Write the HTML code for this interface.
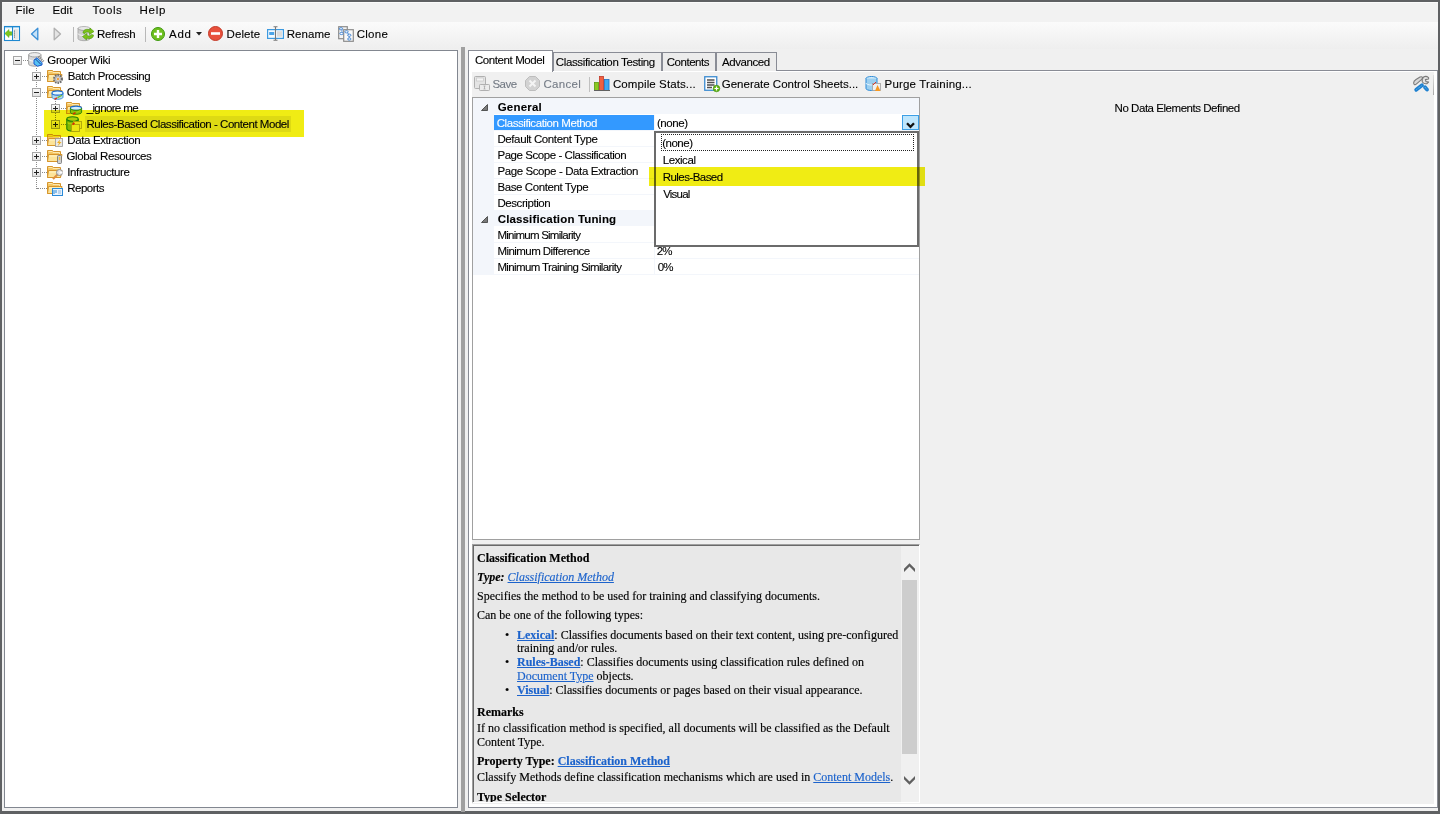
<!DOCTYPE html>
<html><head><meta charset="utf-8"><style>
*{box-sizing:border-box}
html,body{margin:0;padding:0}
body{width:1440px;height:814px;position:relative;overflow:hidden;background:#5f6163;font-family:"Liberation Sans",sans-serif;font-size:11.5px;letter-spacing:-0.45px;color:#000}
.a{position:absolute}
.t{position:absolute;white-space:nowrap;line-height:14px;-webkit-text-stroke:0.1px currentColor}
svg{position:absolute;overflow:visible}
.s{position:absolute;white-space:nowrap;font-family:"Liberation Serif",serif;font-size:12px;letter-spacing:0;line-height:14px;color:#000;-webkit-text-stroke:0.15px currentColor}
.lk{color:#1c63cc;text-decoration:underline}
.dis{color:#8d8d8d}
.hl{position:absolute;background:#f0ec14;mix-blend-mode:multiply}
.exp{position:absolute;width:9px;height:9px;border:1px solid #a6a6a6;background:linear-gradient(#fafafa,#e2e2e2)}
.exp .h{position:absolute;left:1px;top:3px;width:5px;height:1px;background:#222}
.exp .v{position:absolute;left:3px;top:1px;width:1px;height:5px;background:#222}
.dh{position:absolute;height:0;border-top:1px dotted #8a8a8a}
.dv{position:absolute;width:0;border-left:1px dotted #8a8a8a}
</style></head><body>
<div class="a" style="left:2px;top:2px;width:1436px;height:809px;background:#f0f0f0;"></div>
<div class="a" style="left:2px;top:2px;width:1436px;height:1px;background:#fbfbfb;"></div>
<div class="a" style="left:2px;top:3px;width:1436px;height:19px;background:#f2f2f2;"></div>
<div class="t" style="left:15.5px;top:3px;letter-spacing:0.233px;">File</div>
<div class="t" style="left:52.4px;top:3px;letter-spacing:0.067px;">Edit</div>
<div class="t" style="left:92.6px;top:3px;letter-spacing:0.6px;">Tools</div>
<div class="t" style="left:139.5px;top:3px;letter-spacing:0.733px;">Help</div>
<div class="a" style="left:2px;top:22px;width:1436px;height:27px;background:linear-gradient(#fbfbfb,#eeeeee);"></div>
<svg style="left:4px;top:26px" width="16" height="15" viewBox="0 0 16 15">
 <rect x="0.5" y="0.5" width="15" height="14" fill="#fff" stroke="#1e88d0" stroke-width="1.1"/>
 <rect x="1" y="1" width="14" height="1.2" fill="#9fd0f0"/>
 <rect x="8" y="1" width="1.1" height="13.5" fill="#1e88d0"/>
 <rect x="9.6" y="3" width="5" height="10.5" fill="#e6e6e6"/>
 <circle cx="10.5" cy="5" r=".55" fill="#444"/><circle cx="10.5" cy="7" r=".55" fill="#444"/><circle cx="10.5" cy="9" r=".55" fill="#444"/><circle cx="10.5" cy="11" r=".55" fill="#444"/>
 <path d="M0.8 7.5 L5 3.5 L5 5.8 L7.8 5.8 L7.8 9.2 L5 9.2 L5 11.5 Z" fill="#7cc81e" stroke="#52a010" stroke-width=".5"/>
</svg>
<svg style="left:30px;top:27px" width="9" height="14" viewBox="0 0 9 14">
 <path d="M7.8 1.2 L7.8 12.8 L1.5 7 Z" fill="#c6e2f8" stroke="#3a8fd6" stroke-width="1.3" stroke-linejoin="round"/>
</svg>
<svg style="left:53px;top:27px" width="9" height="14" viewBox="0 0 9 14">
 <path d="M1.2 1.2 L1.2 12.8 L7.5 7 Z" fill="#e4e4e4" stroke="#b0b0b0" stroke-width="1.3" stroke-linejoin="round"/>
</svg>
<div class="a" style="left:73px;top:27px;width:1px;height:15px;background:#b8b8b8;"></div>
<svg style="left:77px;top:26px" width="18" height="16" viewBox="0 0 18 16">
 <ellipse cx="7" cy="2.5" rx="6" ry="2" fill="#e8e8e8" stroke="#a8a8a8" stroke-width=".8"/>
 <path d="M1 2.5 L1 12.5 A6 2.2 0 0 0 13 12.5 L13 2.5 A6 2 0 0 1 1 2.5Z" fill="#cfcfcf" stroke="#a0a0a0" stroke-width=".8"/>
 <path d="M1 7.5 A6 2 0 0 0 13 7.5" fill="none" stroke="#f5f5f5" stroke-width="1"/>
 <path d="M6 7 C6 3.5 10 2.5 13 4 L13 2 L17 5.5 L12.5 8.5 L12.5 6.5 C10.5 5.5 8.5 6 8 7.5Z" fill="#7cc21a" stroke="#4f9a0a" stroke-width=".6"/>
 <path d="M16.5 9 C16.5 12.5 12.5 13.5 9.5 12 L9.5 14 L5.5 10.5 L10 7.5 L10 9.5 C12 10.5 14 10 14.5 8.5Z" fill="#7cc21a" stroke="#4f9a0a" stroke-width=".6"/>
</svg>
<div class="t" style="left:97.0px;top:26.5px;letter-spacing:-0.25px;">Refresh</div>
<div class="a" style="left:145px;top:27px;width:1px;height:15px;background:#b8b8b8;"></div>
<svg style="left:151px;top:27px" width="14" height="14" viewBox="0 0 14 14">
 <circle cx="7" cy="7" r="6.5" fill="#6fbf1f" stroke="#3f9a10" stroke-width="1"/>
 <path d="M7 3 V11 M3 7 H11" stroke="#fff" stroke-width="2.4"/>
</svg>
<div class="t" style="left:169.1px;top:26.5px;letter-spacing:0.65px;">Add</div>
<svg style="left:196px;top:32px" width="6" height="4" viewBox="0 0 6 4"><path d="M0 0 H6 L3 3.5Z" fill="#222"/></svg>
<svg style="left:208px;top:26px" width="15" height="15" viewBox="0 0 15 15">
 <circle cx="7.5" cy="7.5" r="7" fill="#e8503c" stroke="#c43a28" stroke-width="1"/>
 <rect x="3" y="6.2" width="9" height="2.6" fill="#fff"/>
</svg>
<div class="t" style="left:226.5px;top:26.5px;letter-spacing:0.1px;">Delete</div>
<svg style="left:267px;top:26px" width="17" height="15" viewBox="0 0 17 15">
 <rect x="0.6" y="3.6" width="15.8" height="8.8" fill="#f4faff" stroke="#3d9ae0" stroke-width="1.2"/>
 <rect x="2.2" y="6" width="5" height="3" fill="#4aa4e8"/>
 <rect x="10" y="5.2" width="5" height="5.5" fill="#dcdcdc"/>
 <path d="M8.5 0.5 V14.5 M6.5 0.8 H10.5 M6.5 14.2 H10.5" stroke="#777" stroke-width="1.1"/>
</svg>
<div class="t" style="left:286.7px;top:26.5px;letter-spacing:0.06px;">Rename</div>
<svg style="left:338px;top:26px" width="16" height="16" viewBox="0 0 16 16">
 <rect x="0.7" y="0.7" width="8.6" height="12" fill="#f4f4f4" stroke="#8c8c8c" stroke-width="1.2"/>
 <rect x="5.7" y="3.7" width="9.6" height="11.6" fill="#f8f8f8" stroke="#8c8c8c" stroke-width="1.2"/>
 <ellipse cx="3" cy="2.8" rx="1.7" ry="1.1" fill="#fff" stroke="#3a7fd0" stroke-width=".9"/>
 <ellipse cx="3.5" cy="7.5" rx="1.7" ry="1.1" fill="#fff" stroke="#3a7fd0" stroke-width=".9"/>
 <ellipse cx="8.5" cy="5.8" rx="1.7" ry="1.1" fill="#fff" stroke="#3a7fd0" stroke-width=".9"/>
 <ellipse cx="11.3" cy="9.2" rx="1.7" ry="1.1" fill="#fff" stroke="#3a7fd0" stroke-width=".9"/>
 <ellipse cx="11.3" cy="13" rx="1.7" ry="1.1" fill="#fff" stroke="#3a7fd0" stroke-width=".9"/>
 <path d="M4 3.8 V6.5 M9 6.8 L11 8.2 M11.3 10.3 V11.9" stroke="#3a7fd0" stroke-width=".7"/>
</svg>
<div class="t" style="left:356.7px;top:26.5px;letter-spacing:0.275px;">Clone</div>
<div class="a" style="left:4px;top:50px;width:454px;height:758px;border:1px solid #828790;background:#fff"></div>
<div class="dh" style="left:23px;top:60px;width:5px"></div>
<div class="dv" style="left:36px;top:68px;height:121px"></div>
<div class="dh" style="left:42px;top:76px;width:5px"></div>
<div class="dh" style="left:42px;top:92px;width:5px"></div>
<div class="dh" style="left:42px;top:140px;width:5px"></div>
<div class="dh" style="left:42px;top:156px;width:5px"></div>
<div class="dh" style="left:42px;top:172px;width:5px"></div>
<div class="dh" style="left:37px;top:188px;width:10px"></div>
<div class="dv" style="left:55px;top:98px;height:26px"></div>
<div class="dh" style="left:61px;top:108px;width:5px"></div>
<div class="dh" style="left:61px;top:124px;width:5px"></div>
<div class="exp" style="left:13px;top:56px"><i class="h"></i></div>
<div class="exp" style="left:32px;top:72px"><i class="h"></i><i class="v"></i></div>
<div class="exp" style="left:32px;top:88px"><i class="h"></i></div>
<div class="exp" style="left:51px;top:104px"><i class="h"></i><i class="v"></i></div>
<div class="exp" style="left:51px;top:120px"><i class="h"></i><i class="v"></i></div>
<div class="exp" style="left:32px;top:136px"><i class="h"></i><i class="v"></i></div>
<div class="exp" style="left:32px;top:152px"><i class="h"></i><i class="v"></i></div>
<div class="exp" style="left:32px;top:168px"><i class="h"></i><i class="v"></i></div>
<svg style="left:28px;top:52px" width="17" height="16" viewBox="0 0 17 16">
 <path d="M0.6 2.8 V12 A6.2 2.2 0 0 0 13 12 V2.8" fill="#d8d8d8" stroke="#a4a4a4" stroke-width="1"/>
 <ellipse cx="6.8" cy="2.8" rx="6.2" ry="2.2" fill="#ececec" stroke="#a4a4a4" stroke-width="1"/>
 <path d="M1 7.6 A6 2 0 0 0 12.6 7.6" fill="none" stroke="#fafafa" stroke-width="1.2"/>
 <path d="M10.5 4.5 L16 10" stroke="#8a8a8a" stroke-width="2.4" stroke-dasharray="1.1 .9"/>
 <path d="M6 8 L9 5.8 L14 10.8 L14 13 L9.5 14.2 L6 12 Z" fill="#56c2f4" stroke="#1a58d0" stroke-width="1"/>
 <path d="M7.5 7 L13 12.5" stroke="#1a3c90" stroke-width="1"/>
</svg>
<div class="t" style="left:47.3px;top:52.5px;letter-spacing:-0.355px;">Grooper Wiki</div>
<svg style="left:47px;top:68px" width="17" height="16" viewBox="0 0 17 16">
 <path d="M0.5 2.5 H5.5 L6.5 3.5 H13.5 V13.5 H0.5Z" fill="#f5c662" stroke="#d6952c" stroke-width="1"/>
 <path d="M1.5 3.5 H5 L6 4.5 H12.5 V6" fill="none" stroke="#fde9b0" stroke-width="1"/>
 <path d="M1.5 6.5 H15 L13.5 13.5 H0.5Z" fill="#fde49a" stroke="#d6952c" stroke-width="1"/>
 <path d="M2.2 8 H13.8" stroke="#fff4c8" stroke-width="1"/>
 <circle cx="11" cy="11" r="4" fill="#d0d0d0" stroke="#6a6a6a" stroke-width="2" stroke-dasharray="1.5 1.05"/><circle cx="11" cy="11" r="2.6" fill="#d8d8d8" stroke="#9a9a9a" stroke-width=".6"/><circle cx="11" cy="11" r="1.2" fill="#f0a040"/>
</svg>
<div class="t" style="left:67.75px;top:68.5px;letter-spacing:-0.437px;">Batch Processing</div>
<svg style="left:47px;top:84px" width="17" height="16" viewBox="0 0 17 16">
 <path d="M0.5 2.5 H5.5 L6.5 3.5 H13.5 V13.5 H0.5Z" fill="#f5c662" stroke="#d6952c" stroke-width="1"/>
 <path d="M1.5 3.5 H5 L6 4.5 H12.5 V6" fill="none" stroke="#fde9b0" stroke-width="1"/>
 <path d="M1.5 6.5 H15 L13.5 13.5 H0.5Z" fill="#fde49a" stroke="#d6952c" stroke-width="1"/>
 <path d="M2.2 8 H13.8" stroke="#fff4c8" stroke-width="1"/>
 <path d="M5 9 V13.3 A5.5 2 0 0 0 16 13.3 V9" fill="#b4d8ec" stroke="#3a90d8" stroke-width=".9"/><ellipse cx="10.5" cy="9" rx="5.5" ry="2.1" fill="#e4f6ff" stroke="#1a6cd0" stroke-width="1.1"/><path d="M7.5 15.3 L10 13.8" stroke="#e83018" stroke-width="1.4"/><path d="M10.5 13.6 L15 11.3" stroke="#70c030" stroke-width="1.2"/>
</svg>
<div class="t" style="left:66.7px;top:84.5px;letter-spacing:-0.419px;">Content Models</div>
<svg style="left:66px;top:100px" width="17" height="16" viewBox="0 0 17 16">
 <path d="M0.5 2.5 H5.5 L6.5 3.5 H13.5 V13.5 H0.5Z" fill="#f5c662" stroke="#d6952c" stroke-width="1"/>
 <path d="M1.5 3.5 H5 L6 4.5 H12.5 V6" fill="none" stroke="#fde9b0" stroke-width="1"/>
 <path d="M1.5 6.5 H15 L13.5 13.5 H0.5Z" fill="#fde49a" stroke="#d6952c" stroke-width="1"/>
 <path d="M2.2 8 H13.8" stroke="#fff4c8" stroke-width="1"/>
 <ellipse cx="10" cy="8.2" rx="5.6" ry="2.1" fill="#d4eefc" stroke="#1a6cd0" stroke-width="1.1"/><path d="M4.4 8.2 V12.3 A5.6 2 0 0 0 15.6 12.3 V8.2 A5.6 2.1 0 0 1 4.4 8.2Z" fill="#96d040" stroke="#2a9010" stroke-width=".9"/><path d="M7 14.2 L9.5 12.6" stroke="#e83018" stroke-width="1.6"/><path d="M10.5 12.5 L14 10.8" stroke="#b8e070" stroke-width="1"/>
</svg>
<div class="t" style="left:86.7px;top:100.5px;letter-spacing:-0.633px;">_ignore me</div>
<svg style="left:66px;top:116px" width="17" height="17" viewBox="0 0 17 17">
 <path d="M0.8 3 V12.8 A5.7 2.3 0 0 0 12.2 12.8 V3" fill="#8cc83a" stroke="#1f8a10" stroke-width="1.1"/>
 <ellipse cx="6.5" cy="3" rx="5.7" ry="2.3" fill="#b4e070" stroke="#1f8a10" stroke-width="1.1"/>
 <path d="M1.5 6.8 A5.5 2 0 0 0 11.5 6.8" fill="none" stroke="#c8f080" stroke-width=".9"/>
 <rect x="7.5" y="5.5" width="8" height="7" fill="#f6f6e8" stroke="#b8b070" stroke-width=".9"/>
 <rect x="5.5" y="8.5" width="8" height="7" fill="#fafaf0" stroke="#b8b070" stroke-width=".9"/>
 <path d="M6.5 8.5 L8.5 7" stroke="#e83018" stroke-width="1.6"/>
</svg>
<div class="a" style="left:85px;top:116px;width:206px;height:16px;background:#ececec;"></div>
<div class="t" style="left:86.5px;top:116.5px;letter-spacing:-0.463px;">Rules-Based Classification - Content Model</div>
<svg style="left:47px;top:132px" width="17" height="16" viewBox="0 0 17 16">
 <path d="M0.5 2.5 H5.5 L6.5 3.5 H13.5 V13.5 H0.5Z" fill="#f5c662" stroke="#d6952c" stroke-width="1"/>
 <path d="M1.5 3.5 H5 L6 4.5 H12.5 V6" fill="none" stroke="#fde9b0" stroke-width="1"/>
 <path d="M1.5 6.5 H15 L13.5 13.5 H0.5Z" fill="#fde49a" stroke="#d6952c" stroke-width="1"/>
 <path d="M2.2 8 H13.8" stroke="#fff4c8" stroke-width="1"/>
 <rect x="8.5" y="6.5" width="7" height="8" fill="#e8e8e8" stroke="#9a9a9a" stroke-width=".8"/><path d="M13 7.5 L10 11 H12 L10.5 14.5 L14.5 10 H12.5Z" fill="#f0b020"/>
</svg>
<div class="t" style="left:67.3px;top:132.5px;letter-spacing:-0.379px;">Data Extraction</div>
<svg style="left:47px;top:148px" width="17" height="16" viewBox="0 0 17 16">
 <path d="M0.5 2.5 H5.5 L6.5 3.5 H13.5 V13.5 H0.5Z" fill="#f5c662" stroke="#d6952c" stroke-width="1"/>
 <path d="M1.5 3.5 H5 L6 4.5 H12.5 V6" fill="none" stroke="#fde9b0" stroke-width="1"/>
 <path d="M1.5 6.5 H15 L13.5 13.5 H0.5Z" fill="#fde49a" stroke="#d6952c" stroke-width="1"/>
 <path d="M2.2 8 H13.8" stroke="#fff4c8" stroke-width="1"/>
 <rect x="10.5" y="7.5" width="4" height="8" rx="1" fill="#d0d0d0" stroke="#707070" stroke-width=".8"/><rect x="11.8" y="9" width="1.4" height="3" fill="#f0c040"/>
</svg>
<div class="t" style="left:66.5px;top:148.5px;letter-spacing:-0.413px;">Global Resources</div>
<svg style="left:47px;top:164px" width="17" height="16" viewBox="0 0 17 16">
 <path d="M0.5 2.5 H5.5 L6.5 3.5 H13.5 V13.5 H0.5Z" fill="#f5c662" stroke="#d6952c" stroke-width="1"/>
 <path d="M1.5 3.5 H5 L6 4.5 H12.5 V6" fill="none" stroke="#fde9b0" stroke-width="1"/>
 <path d="M1.5 6.5 H15 L13.5 13.5 H0.5Z" fill="#fde49a" stroke="#d6952c" stroke-width="1"/>
 <path d="M2.2 8 H13.8" stroke="#fff4c8" stroke-width="1"/>
 <path d="M6 15 L12 9" stroke="#e09040" stroke-width="2.2"/><circle cx="12.5" cy="8.5" r="3" fill="#e0e0e0" stroke="#909090" stroke-width="1"/><rect x="12.5" y="7.5" width="3" height="2" fill="#fff"/>
</svg>
<div class="t" style="left:67.3px;top:164.5px;letter-spacing:-0.392px;">Infrastructure</div>
<svg style="left:47px;top:180px" width="17" height="16" viewBox="0 0 17 16">
 <path d="M0.5 2.5 H5.5 L6.5 3.5 H13.5 V13.5 H0.5Z" fill="#f5c662" stroke="#d6952c" stroke-width="1"/>
 <path d="M1.5 3.5 H5 L6 4.5 H12.5 V6" fill="none" stroke="#fde9b0" stroke-width="1"/>
 <path d="M1.5 6.5 H15 L13.5 13.5 H0.5Z" fill="#fde49a" stroke="#d6952c" stroke-width="1"/>
 <path d="M2.2 8 H13.8" stroke="#fff4c8" stroke-width="1"/>
 <rect x="5.5" y="8.5" width="10" height="7" fill="#e8f2fc" stroke="#2a8ad8" stroke-width="1"/><path d="M7 10 V14 M9 10 V13" stroke="#2a8ad8" stroke-width="1"/><path d="M11 11 H14 M11 13 H14" stroke="#7aa8d8" stroke-width=".8"/>
</svg>
<div class="t" style="left:67.3px;top:180.5px;letter-spacing:-0.517px;">Reports</div>
<div class="a" style="left:461px;top:47px;width:4px;height:765px;background:#a0a0a0;"></div>
<div class="a" style="left:468px;top:70px;width:970px;height:738px;border:1px solid #898c95;background:#fff"></div>
<div class="a" style="left:472px;top:72px;width:962px;height:732px;background:#f0f0f0;"></div>
<div class="a" style="left:553px;top:52px;width:109px;height:19px;border:1px solid #898c95;border-bottom:none;background:#ececec"></div>
<div class="t" style="left:555.8px;top:55px;letter-spacing:-0.367px;">Classification Testing</div>
<div class="a" style="left:662px;top:52px;width:54px;height:19px;border:1px solid #898c95;border-bottom:none;background:#ececec"></div>
<div class="t" style="left:666.8px;top:55px;letter-spacing:-0.486px;">Contents</div>
<div class="a" style="left:716px;top:52px;width:61px;height:19px;border:1px solid #898c95;border-bottom:none;background:#ececec"></div>
<div class="t" style="left:722.1px;top:55px;letter-spacing:-0.443px;">Advanced</div>
<div class="a" style="left:468px;top:50px;width:85px;height:22px;border:1px solid #898c95;border-bottom:none;background:#fff"></div>
<div class="t" style="left:474.9px;top:52.5px;letter-spacing:-0.4px;">Content Model</div>
<div class="a" style="left:472px;top:72px;width:962px;height:24px;background:#f0f0f0;"></div>
<svg style="left:474px;top:76px" width="16" height="15" viewBox="0 0 16 15">
 <rect x="0.5" y="0.5" width="11" height="12" rx="1" fill="#e4e4e4" stroke="#b0b0b0"/>
 <rect x="2.5" y="2" width="7" height="3" fill="#f4f4f4" stroke="#c0c0c0" stroke-width=".6"/>
 <rect x="5.5" y="8.5" width="10" height="6" rx=".8" fill="#ececec" stroke="#b0b0b0"/>
 <path d="M9.5 10 H11.5 M10.5 10 V13 M9.5 13 H11.5" stroke="#a0a0a0" stroke-width=".7"/>
</svg>
<div class="t" style="left:492.4px;top:76.5px;letter-spacing:-0.5px;color:#747b85">Save</div>
<svg style="left:525px;top:76px" width="15" height="15" viewBox="0 0 15 15">
 <path d="M4.5 0.5 H10.5 L14.5 4.5 V10.5 L10.5 14.5 H4.5 L0.5 10.5 V4.5Z" fill="#d2d2d2" stroke="#bdbdbd"/>
 <path d="M4.5 4.5 L10.5 10.5 M10.5 4.5 L4.5 10.5" stroke="#f4f4f4" stroke-width="2"/>
</svg>
<div class="t" style="left:543.5px;top:76.5px;letter-spacing:0.28px;color:#747b85">Cancel</div>
<div class="a" style="left:589px;top:77px;width:1px;height:15px;background:#c0c0c0;"></div>
<svg style="left:594px;top:76px" width="16" height="15" viewBox="0 0 16 15">
 <rect x="0.5" y="6.5" width="4" height="8" fill="#8cc820" stroke="#5a9a10" stroke-width=".8"/>
 <rect x="5.5" y="0.5" width="4" height="14" fill="#f06040" stroke="#c03828" stroke-width=".8"/>
 <rect x="10.5" y="3.5" width="4.5" height="11" fill="#40a8f0" stroke="#2070c0" stroke-width=".8"/>
 <path d="M0 14.5 H16" stroke="#606060" stroke-width="1"/>
</svg>
<div class="t" style="left:612.9px;top:76.5px;letter-spacing:0.107px;">Compile Stats...</div>
<svg style="left:704px;top:76px" width="16" height="16" viewBox="0 0 16 16">
 <rect x="0.75" y="0.75" width="12" height="13.5" fill="#fff" stroke="#3a8ad0" stroke-width="1.3"/>
 <path d="M3 4 H10.5 M3 6.5 H10.5 M3 9 H10.5 M3 11.5 H8" stroke="#505050" stroke-width="1.3"/>
 <circle cx="12.5" cy="12.5" r="3.3" fill="#62b412" stroke="#3f9010" stroke-width=".6"/>
 <path d="M12.5 10.5 V14.5 M10.5 12.5 H14.5" stroke="#fff" stroke-width="1.2"/>
</svg>
<div class="t" style="left:721.8px;top:76.5px;letter-spacing:-0.012px;">Generate Control Sheets...</div>
<svg style="left:865px;top:76px" width="17" height="16" viewBox="0 0 17 16">
 <ellipse cx="6.5" cy="2.5" rx="5.5" ry="2" fill="#d4ecfa" stroke="#2a8ad8" stroke-width="1"/>
 <path d="M1 2.5 V12.5 A5.5 2 0 0 0 12 12.5 V2.5" fill="#9ccff0" stroke="#2a8ad8" stroke-width="1"/>
 <path d="M1 7 A5.5 2 0 0 0 12 7" fill="none" stroke="#e8f6ff" stroke-width="1"/>
 <rect x="7.5" y="7.5" width="8" height="7" fill="#f0f0f0" stroke="#a0a0a0" stroke-width=".8"/>
 <path d="M10 15 L12.5 9 L15.5 15Z" fill="#f89820"/>
 <path d="M8 9 L11 6" stroke="#e03020" stroke-width="1"/>
</svg>
<div class="t" style="left:884.6px;top:76.5px;letter-spacing:0.169px;">Purge Training...</div>
<svg style="left:1413px;top:76px" width="16" height="16" viewBox="0 0 16 16">
 <path d="M0.6 7 Q0.6 5 3 3.5 L7 1 Q9 0.2 9.6 1.6 L9 3.2 L5 6.6 L2.6 8.6 Q1 9.2 0.6 7Z" fill="#d8d8d8" stroke="#7c7c7c" stroke-width="1.1" stroke-linejoin="round"/>
 <path d="M15.6 1.6 Q13 -0.4 10.6 1 Q8.4 3 9.4 6 Q11 8.2 14 7.6 L15.6 6 L13 5.6 L12.4 3.6 L15.6 3Z" fill="#e2e2e2" stroke="#7a7a7a" stroke-width="1.1" stroke-linejoin="round"/>
 <path d="M9 9.3 L3.2 13.8" stroke="#1e80d0" stroke-width="3.8" stroke-linecap="round"/>
 <path d="M8.5 9.8 L3.5 13.5" stroke="#78c4f4" stroke-width=".9" stroke-dasharray="1 .8"/>
 <path d="M12 11.2 L14 13.6" stroke="#1e80d0" stroke-width="3.8" stroke-linecap="round"/>
 <path d="M12 11.2 L14 13.6" stroke="#78c4f4" stroke-width=".9" stroke-dasharray="1 .8"/>
</svg>
<div class="a" style="left:1433px;top:75px;width:1px;height:20px;background:linear-gradient(#e0e0e0,#a8a8a8);"></div>
<div class="a" style="left:472px;top:97px;width:448px;height:443px;border:1px solid #a0a0a0;background:#fff"></div>
<div class="a" style="left:473px;top:98px;width:21px;height:177px;background:#f3f6fb;"></div>
<div class="a" style="left:494px;top:98px;width:425px;height:16px;background:#f3f6fb;"></div>
<svg style="left:481px;top:104px" width="7" height="7" viewBox="0 0 7 7"><path d="M6.5 0.5 V6.5 H0.5Z" fill="#7a7a7a" stroke="#3a3a3a" stroke-width=".8"/></svg>
<div class="t" style="left:497.7px;top:100px;letter-spacing:0.217px;font-weight:bold">General</div>
<div class="a" style="left:494px;top:130px;width:425px;height:1px;background:#f3f6fb;"></div>
<div class="a" style="left:654px;top:115px;width:1px;height:15px;background:#f3f6fb;"></div>
<div class="a" style="left:494px;top:115px;width:160px;height:15px;background:#3399ff;"></div>
<div class="t" style="left:496.7px;top:116px;letter-spacing:-0.425px;color:#fff">Classification Method</div>
<div class="t" style="left:656.9px;top:116px;letter-spacing:-0.42px;">(none)</div>
<div class="a" style="left:494px;top:146px;width:425px;height:1px;background:#f3f6fb;"></div>
<div class="a" style="left:654px;top:131px;width:1px;height:15px;background:#f3f6fb;"></div>
<div class="t" style="left:497.4px;top:132px;letter-spacing:-0.389px;">Default Content Type</div>
<div class="a" style="left:494px;top:162px;width:425px;height:1px;background:#f3f6fb;"></div>
<div class="a" style="left:654px;top:147px;width:1px;height:15px;background:#f3f6fb;"></div>
<div class="t" style="left:497.4px;top:148px;letter-spacing:-0.435px;">Page Scope - Classification</div>
<div class="a" style="left:494px;top:178px;width:425px;height:1px;background:#f3f6fb;"></div>
<div class="a" style="left:654px;top:163px;width:1px;height:15px;background:#f3f6fb;"></div>
<div class="t" style="left:497.4px;top:164px;letter-spacing:-0.393px;">Page Scope - Data Extraction</div>
<div class="a" style="left:494px;top:194px;width:425px;height:1px;background:#f3f6fb;"></div>
<div class="a" style="left:654px;top:179px;width:1px;height:15px;background:#f3f6fb;"></div>
<div class="t" style="left:497.4px;top:180px;letter-spacing:-0.4px;">Base Content Type</div>
<div class="a" style="left:494px;top:210px;width:425px;height:1px;background:#f3f6fb;"></div>
<div class="a" style="left:654px;top:195px;width:1px;height:15px;background:#f3f6fb;"></div>
<div class="t" style="left:497.4px;top:196px;letter-spacing:-0.42px;">Description</div>
<div class="a" style="left:494px;top:211px;width:425px;height:15px;background:#f3f6fb;"></div>
<svg style="left:481px;top:216px" width="7" height="7" viewBox="0 0 7 7"><path d="M6.5 0.5 V6.5 H0.5Z" fill="#7a7a7a" stroke="#3a3a3a" stroke-width=".8"/></svg>
<div class="t" style="left:497.7px;top:212px;letter-spacing:0.15px;font-weight:bold">Classification Tuning</div>
<div class="a" style="left:494px;top:242px;width:425px;height:1px;background:#f3f6fb;"></div>
<div class="a" style="left:654px;top:227px;width:1px;height:15px;background:#f3f6fb;"></div>
<div class="t" style="left:497.4px;top:228px;letter-spacing:-0.759px;">Minimum Similarity</div>
<div class="a" style="left:494px;top:258px;width:425px;height:1px;background:#f3f6fb;"></div>
<div class="a" style="left:654px;top:243px;width:1px;height:15px;background:#f3f6fb;"></div>
<div class="t" style="left:497.4px;top:244px;letter-spacing:-0.547px;">Minimum Difference</div>
<div class="t" style="left:656.7px;top:244px;letter-spacing:-0.8px;">2%</div>
<div class="a" style="left:494px;top:274px;width:425px;height:1px;background:#f3f6fb;"></div>
<div class="a" style="left:654px;top:259px;width:1px;height:15px;background:#f3f6fb;"></div>
<div class="t" style="left:497.4px;top:260px;letter-spacing:-0.612px;">Minimum Training Similarity</div>
<div class="t" style="left:657.7px;top:260px;letter-spacing:-0.8px;">0%</div>
<div class="a" style="left:902px;top:115px;width:17px;height:15px;background:#bee6fd;border:1px solid #3c9fe6"></div>
<svg style="left:906px;top:122px" width="9" height="7" viewBox="0 0 9 7"><path d="M1 1.2 L4.5 4.8 L8 1.2" fill="none" stroke="#111" stroke-width="2.3"/></svg>
<div class="a" style="left:654px;top:131px;width:265px;height:116px;border:2px solid #6b6b6b;background:#fff"></div>
<div class="a" style="left:661px;top:134px;width:253px;height:17px;border:1px dotted #222"></div>
<div class="t" style="left:662.2px;top:135.5px;letter-spacing:-0.48px;">(none)</div>
<div class="t" style="left:662.7px;top:152.5px;letter-spacing:-0.417px;">Lexical</div>
<div class="t" style="left:662.7px;top:169.5px;letter-spacing:-0.54px;">Rules-Based</div>
<div class="t" style="left:663.2px;top:186.5px;letter-spacing:-0.8px;">Visual</div>
<div class="a" style="left:472px;top:544px;width:448px;height:259px;border-top:1px solid #a0a0a0;border-left:1px solid #a0a0a0;border-right:1px solid #fff;border-bottom:1px solid #fff;background:#696969"></div>
<div class="a" style="left:474px;top:546px;width:445px;height:256px;background:#e8e8e8;"></div>
<div class="a" style="left:901px;top:546px;width:18px;height:256px;background:#f0f0f0;"></div>
<div class="a" style="left:902px;top:580px;width:15px;height:174px;background:#cdcdcd;"></div>
<svg style="left:904px;top:563px" width="11" height="9" viewBox="0 0 11 9"><path d="M0 9 L0 5.8 L5.5 0.3 L11 5.8 L11 9 L5.5 3.6Z" fill="#606060"/></svg>
<svg style="left:904px;top:776px" width="11" height="9" viewBox="0 0 11 9"><path d="M0 0 L0 3.2 L5.5 8.7 L11 3.2 L11 0 L5.5 5.4Z" fill="#606060"/></svg>
<div class="a" style="left:474px;top:546px;width:427px;height:256px;overflow:hidden">
<div class="s" style="left:3px;top:5px"><b>Classification Method</b></div>
<div class="s" style="left:3px;top:24px"><b><i>Type:</i></b> <i class="lk">Classification Method</i></div>
<div class="s" style="left:3px;top:43px">Specifies the method to be used for training and classifying documents.</div>
<div class="s" style="left:3px;top:62px">Can be one of the following types:</div>
<div class="s" style="left:31px;top:82px">&bull;</div>
<div class="s" style="left:43px;top:82px"><b class="lk">Lexical</b>: Classifies documents based on their text content, using pre-configured</div>
<div class="s" style="left:43px;top:95px">training and/or rules.</div>
<div class="s" style="left:31px;top:109px">&bull;</div>
<div class="s" style="left:43px;top:109px"><b class="lk">Rules-Based</b>: Classifies documents using classification rules defined on</div>
<div class="s" style="left:43px;top:123px"><span class="lk">Document Type</span> objects.</div>
<div class="s" style="left:31px;top:137px">&bull;</div>
<div class="s" style="left:43px;top:137px"><b class="lk">Visual</b>: Classifies documents or pages based on their visual appearance.</div>
<div class="s" style="left:3px;top:159px"><b>Remarks</b></div>
<div class="s" style="left:3px;top:175px">If no classification method is specified, all documents will be classified as the Default</div>
<div class="s" style="left:3px;top:189px">Content Type.</div>
<div class="s" style="left:3px;top:208px"><b>Property Type: <span class="lk">Classification Method</span></b></div>
<div class="s" style="left:3px;top:224px">Classify Methods define classification mechanisms which are used in <span class="lk">Content Models</span>.</div>
<div class="s" style="left:3px;top:244px"><b>Type Selector</b></div>
</div>
<div class="t" style="left:1114.6px;top:101px;letter-spacing:-0.461px;">No Data Elements Defined</div>
<div class="hl" style="left:44px;top:110px;width:260px;height:27px"></div>
<div class="hl" style="left:649px;top:167px;width:276px;height:19px"></div>
</body></html>
